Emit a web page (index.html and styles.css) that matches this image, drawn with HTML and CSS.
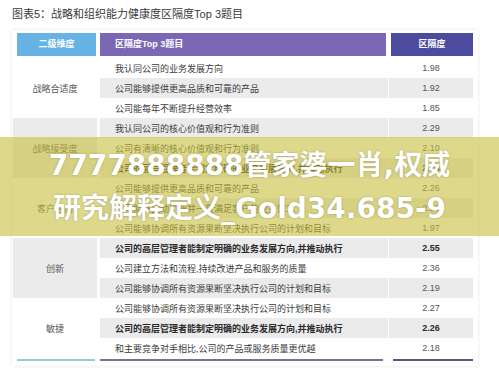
FILE: index.html
```html
<!DOCTYPE html>
<html lang="zh">
<head>
<meta charset="utf-8">
<link rel="stylesheet" href="styles.css">
</head>
<body>
<div class="title">图表5：战略和组织能力健康度区隔度Top 3题目</div>
<div class="card">
  <div class="grid">
    <div class="h h1">二级维度</div>
    <div class="h h2">区隔度Top 3题目</div>
    <div class="h h3">区隔度</div>

    <div class="g">战略合适度</div>
    <div class="q">我认同公司的业务发展方向</div><div class="v">1.98</div>
    <div class="q alt">公司能够提供更高品质和可靠的产品</div><div class="v alt">1.92</div>
    <div class="q">公司能每年不断提升经营效率</div><div class="v">1.85</div>

    <div class="g alt">战略接受度</div>
    <div class="q alt">我认同公司的核心价值观和行为准则</div><div class="v alt">2.29</div>
    <div class="q">公司有清晰的核心价值观和行为准则</div><div class="v">2.10</div>
    <div class="q alt b">公司的高层管理者能制定明确的业务发展方向,并推动执行</div><div class="v alt b">2.24</div>

    <div class="g">客户导向</div>
    <div class="q">公司能够提供更高品质和可靠的产品</div><div class="v">2.26</div>
    <div class="q alt">公司能够主动了解并一贯满足客户的业务需求</div><div class="v alt">2.21</div>
    <div class="q">公司能够协调所有资源果断坚决执行公司的计划和目标</div><div class="v">1.97</div>

    <div class="g alt">创新</div>
    <div class="q alt b">公司的高层管理者能制定明确的业务发展方向,并推动执行</div><div class="v alt b">2.55</div>
    <div class="q">公司建立方法和流程,持续改进产品和服务的质量</div><div class="v">2.36</div>
    <div class="q alt">公司能够协调所有资源果断坚决执行公司的计划和目标</div><div class="v alt">2.19</div>

    <div class="g">敏捷</div>
    <div class="q">公司能够协调所有资源果断坚决执行公司的计划和目标</div><div class="v">2.27</div>
    <div class="q alt b">公司的高层管理者能制定明确的业务发展方向,并推动执行</div><div class="v alt b">2.26</div>
    <div class="q">和主要竞争对手相比,公司的产品或服务质量更优越</div><div class="v">2.18</div>
  </div>
  <div class="foot">
    <div class="l l1"></div>
    <div class="l l2"></div>
    <div class="l l3"></div>
  </div>
</div>
<div class="band">
  <div class="band-text">7777888888管家婆一肖,权威<br>研究解释定义_Gold34.685-9</div>
</div>
</body>
</html>
```
FILE: styles.css
```css
html, body {
  margin: 0;
  padding: 0;
  background: #ffffff;
}
body {
  width: 499px;
  height: 372px;
  overflow: hidden;
  font-family: "Liberation Sans", "Noto Sans CJK SC", sans-serif;
  position: relative;
}
.title {
  padding: 6px 0 0 12px;
  height: 16px;
  line-height: 16px;
  font-size: 11px;
  color: #3a3a3a;
}
.card {
  margin: 8px 0 0 12px;
  width: 466px;
  padding: 3px 0 5px 1px;
  box-sizing: border-box;
  box-shadow: 0 0 3px rgba(0, 0, 0, 0.12);
}
.grid {
  display: grid;
  grid-template-columns: 87px 289px 84px;
  grid-template-rows: 25px;
  grid-auto-rows: 20px;
  font-size: 9px;
}
.h {
  margin-bottom: 2px;
  display: flex;
  align-items: center;
  color: #ffffff;
  font-weight: bold;
  line-height: 23px;
}
.h1 {
  grid-column: 1;
  margin-left: 4px;
  margin-right: 4px;
  justify-content: center;
  background: #66b2e3;
}
.h2 {
  grid-column: 2;
  margin-right: 3px;
  padding-left: 15px;
  background: #7a68b5;
}
.h3 {
  grid-column: 3;
  margin-left: 2px;
  justify-content: center;
  background: #4c4b9d;
}
.g {
  grid-column: 1;
  grid-row: span 3;
  margin-right: 3px;
  display: flex;
  align-items: center;
  justify-content: center;
  color: #555555;
}
.q {
  grid-column: 2;
  margin-right: 1px;
  padding-left: 15px;
  display: flex;
  align-items: center;
  color: #3a3a3a;
  white-space: nowrap;
}
.v {
  grid-column: 3;
  display: flex;
  align-items: center;
  justify-content: center;
  color: #555555;
}
.alt {
  background: #ebebeb;
}
.b {
  font-weight: bold;
  color: #2a2a2a;
}
.foot {
  display: flex;
  margin-top: 1px;
  height: 2px;
}
.l {
  height: 2px;
}
.l1 {
  width: 78px;
  margin-left: 4px;
  background: #8fcde0;
}
.l2 {
  width: 283px;
  margin-left: 5px;
  background: #76748a;
}
.l3 {
  width: 80px;
  margin-left: 10px;
  background: #58587a;
}
.band {
  position: absolute;
  left: 0;
  top: 137px;
  width: 499px;
  height: 99px;
  background: rgba(200, 192, 60, 0.6);
  display: flex;
  align-items: center;
  justify-content: center;
}
.band-text {
  font-family: "DejaVu Sans", "Noto Sans CJK SC", sans-serif;
  font-weight: bold;
  font-size: 28px;
  line-height: 43px;
  color: #ffffff;
  text-align: center;
  text-shadow: 0 0 2px rgba(0, 0, 0, 0.3);
}
```
